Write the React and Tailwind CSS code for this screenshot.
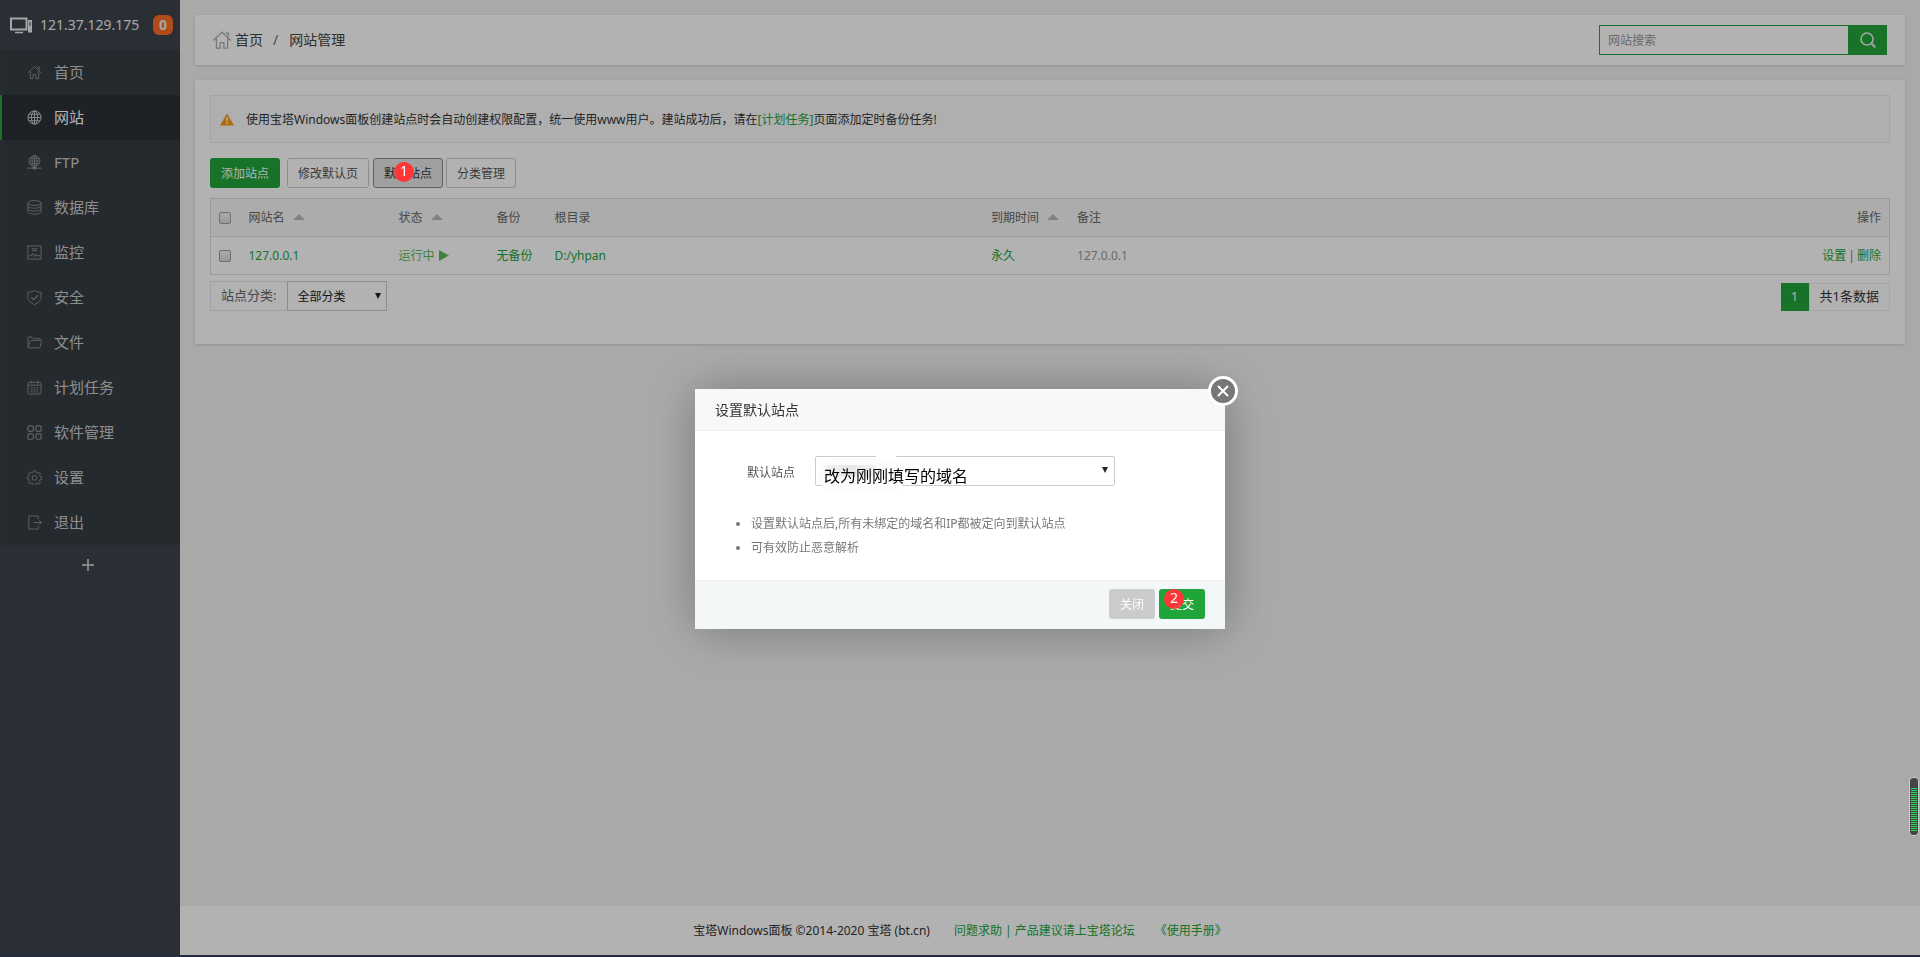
import React from "react";

const svgBase = {
  width: 15,
  height: 15,
  viewBox: "0 0 16 16",
  fill: "none",
  stroke: "currentColor",
  strokeWidth: 1,
  "aria-hidden": true,
};

function HomeIcon({ className }) {
  return (
    <svg {...svgBase} className={className}>
      <path d="M1 8.4 8 1.6l7 6.8M3.5 6.8v7.7h3V10h3v4.500h3V6.800M11 2.400h2v3" />
    </svg>
  );
}

function GlobeIcon() {
  return (
    <svg {...svgBase}>
      <circle cx="8" cy="8" r="7" />
      <ellipse cx="8" cy="8" rx="3.300" ry="7" />
      <path d="M8 1v14M1 8h14M2 4.500h12M2 11.500h12" />
    </svg>
  );
}

function FtpIcon() {
  return (
    <svg {...svgBase}>
      <circle cx="8" cy="6.500" r="5.800" />
      <ellipse cx="8" cy="6.500" rx="2.700" ry="5.800" />
      <path d="M8 .7v13M2.200 6.500h11.600M3 3.700h10M3 9.300h10" />
      <path d="M0 14h16" />
      <path d="M6 14h4" strokeWidth="2.500" />
    </svg>
  );
}

function DatabaseIcon() {
  return (
    <svg {...svgBase}>
      <ellipse cx="8" cy="3.200" rx="7" ry="2.500" />
      <path d="M1 3.200v9.400c0 1.400 3.100 2.500 7 2.500s7-1.100 7-2.500V3.200M1 6.300c0 1.400 3.100 2.500 7 2.500s7-1.100 7-2.500M1 9.400c0 1.400 3.100 2.500 7 2.500s7-1.100 7-2.500" />
    </svg>
  );
}

function MonitorIcon() {
  return (
    <svg {...svgBase}>
      <rect x="1" y="1" width="14" height="14" />
      <path d="M5 4h6M5 6h6M2 11.500h2.500L6 8.500l2 4 1.500-3 1 2H14" />
    </svg>
  );
}

function ShieldIcon() {
  return (
    <svg {...svgBase}>
      <path d="M8 .6c2.200 1.200 4.300 1.600 7 1.700v5.200c0 3.700-2.800 6.300-7 8-4.200-1.700-7-4.300-7-8V2.300C3.700 2.200 5.800 1.800 8 .6z" />
      <path d="m4.500 7.700 2.700 2.700 4.600-4.800" strokeWidth="1.300" />
    </svg>
  );
}

function FolderIcon() {
  return (
    <svg {...svgBase}>
      <path d="M1 13V3.200c0-.7.300-1 1-1h3.300l1.500 1.600h6.200c.7 0 1 .3 1 1v1M1 13c0 .4.300.700.8.700h11.200c.6 0 .9-.3 1-.8l1.500-6.200c.1-.6-.2-.9-.7-.9H4.700c-.6 0-1 .2-1.200.8z" />
    </svg>
  );
}

function CalendarIcon() {
  return (
    <svg {...svgBase}>
      <rect x="1" y="2.500" width="14" height="12.500" rx="1.500" />
      <path d="M4.500 .8v3M11.500 .8v3M1 5.500h14" />
      <path d="M4 8.300h8M4 10.500h8M4 12.700h8" strokeDasharray="2 1" />
    </svg>
  );
}

function GridIcon() {
  return (
    <svg {...svgBase} strokeWidth="1.300">
      <rect x="1" y="1" width="5.700" height="5.700" rx="1.500" />
      <rect x="9.500" y="1" width="5.700" height="5.700" rx="1.500" />
      <rect x="1" y="9.500" width="5.700" height="5.700" rx="1.500" />
      <rect x="9.500" y="9.500" width="5.700" height="5.700" rx="1.500" />
    </svg>
  );
}

function GearIcon() {
  return (
    <svg {...svgBase}>
      <path d="M6.800 .8h2.400l.5 1.900 1.300.6 1.700-1 1.700 1.700-1 1.700.6 1.300 1.700.4v2.300l-1.800.5-.6 1.300 1 1.700-1.700 1.700-1.700-1-1.200.6-.5 1.700H6.800l-.5-1.800-1.300-.5-1.700 1-1.700-1.700 1-1.700-.6-1.300-1.600-.5V7.400L2 7l.6-1.300-1-1.700 1.700-1.700 1.700 1 1.300-.6z" />
      <circle cx="8" cy="8.400" r="2.500" />
    </svg>
  );
}

function ExitIcon() {
  return (
    <svg {...svgBase}>
      <path d="M12 4.500V1H2v14h10v-3.500M7 8h8.500M12.800 5.500 15.300 8l-2.500 2.500" />
    </svg>
  );
}

const menu = [
  { label: "首页", Icon: HomeIcon },
  { label: "网站", Icon: GlobeIcon, active: true },
  { label: "FTP", Icon: FtpIcon },
  { label: "数据库", Icon: DatabaseIcon },
  { label: "监控", Icon: MonitorIcon },
  { label: "安全", Icon: ShieldIcon },
  { label: "文件", Icon: FolderIcon },
  { label: "计划任务", Icon: CalendarIcon },
  { label: "软件管理", Icon: GridIcon },
  { label: "设置", Icon: GearIcon },
  { label: "退出", Icon: ExitIcon },
];

function Sidebar() {
  return (
    <aside className="w-45 shrink-0 bg-[#3c444d]">
      <div className="flex h-[50px] items-center pl-2.5 text-sm text-[#eee]">
        <svg width="22" height="17" viewBox="0 0 22 17" fill="none" stroke="currentColor" aria-hidden="true">
          <rect x="1" y="1.500" width="15.500" height="11" strokeWidth="2" />
          <path d="M5 15.500h8" strokeWidth="1.500" />
          <rect x="18.500" y="3.500" width="3" height="11.500" fill="currentColor" />
          <path d="M19 6h2M19 8h2" stroke="#3c444d" />
        </svg>
        <span className="ml-2 flex-1">121.37.129.175</span>
        <span className="mr-[7px] flex size-5 items-center justify-center rounded-md bg-[#fc6d26] text-sm font-bold">
          0
        </span>
      </div>
      <nav className="bg-[#353d44]">
        <ul>
          {menu.map(({ label, Icon, active }) => (
            <li key={label}>
              <a
                href="#"
                className={
                  active
                    ? "flex h-[45px] items-center gap-3 border-l-2 border-[#20a53a] bg-[#2c3138] pb-px pl-[25px] text-[15px] text-white"
                    : "flex h-[45px] items-center gap-3 border-l-2 border-[#3b3f43] pb-px pl-[25px] text-[15px] text-[#ccc]"
                }
              >
                <span className={active ? "text-[#ccc]" : "text-[#8b9095]"}>
                  <Icon />
                </span>
                {label}
              </a>
            </li>
          ))}
        </ul>
      </nav>
      <button type="button" aria-label="添加" className="flex h-10 w-full items-center justify-center pr-1 text-[#bbb]">
        <svg width="14" height="14" viewBox="0 0 14 14" fill="none" stroke="currentColor" strokeWidth="2" aria-hidden="true">
          <path d="M7 1v12M1 7h12" />
        </svg>
      </button>
    </aside>
  );
}

function Badge({ children }) {
  return (
    <span className="flex size-5 items-center justify-center rounded-full bg-[#ff3737] pb-0.5 text-sm leading-4 text-white">
      {children}
    </span>
  );
}

function SortArrow() {
  return (
    <svg className="mb-0.5 ml-2 inline-block align-baseline" width="12" height="6" viewBox="0 0 12 6" aria-hidden="true">
      <path d="M0 6 6 0l6 6z" fill="#bbb" />
    </svg>
  );
}

function Checkbox({ label }) {
  return (
    <input
      type="checkbox"
      aria-label={label}
      className="block size-3 appearance-none rounded-xs border border-[#a0a0a0] bg-linear-to-b from-[#f4f4f4] to-[#dcdcdc]"
    />
  );
}

function DownArrow({ className }) {
  return (
    <svg className={className} width="6" height="6" viewBox="0 0 6 6" aria-hidden="true">
      <path d="M0 0h6L3 6z" fill="#222" />
    </svg>
  );
}

const outlineButton =
  "h-[30px] rounded-[3px] border border-[#ccc] bg-white px-2.5 pt-0.5 text-xs text-[#555]";

function SiteTable() {
  return (
    <table className="mt-2.5 w-full table-fixed border border-[#ddd] text-left text-xs text-[#666]">
      <colgroup>
        <col className="w-[30px]" />
        <col className="w-[150px]" />
        <col className="w-[98px]" />
        <col className="w-[58px]" />
        <col className="w-[26%]" />
        <col className="w-[86px]" />
        <col />
        <col className="w-[150px]" />
      </colgroup>
      <thead>
        <tr className="h-[38px] border-b border-[#ddd] bg-[#f6f6f6]">
          <th className="px-2"><Checkbox label="全选" /></th>
          <th className="px-2 font-normal">网站名<SortArrow /></th>
          <th className="px-2 font-normal">状态<SortArrow /></th>
          <th className="px-2 font-normal">备份</th>
          <th className="px-2 font-normal">根目录</th>
          <th className="px-2 font-normal whitespace-nowrap">到期时间<SortArrow /></th>
          <th className="px-2 font-normal">备注</th>
          <th className="px-2 text-right font-normal">操作</th>
        </tr>
      </thead>
      <tbody>
        <tr className="h-[38px] text-[#20a53a]">
          <td className="px-2"><Checkbox label="127.0.0.1" /></td>
          <td className="px-2"><a href="#">127.0.0.1</a></td>
          <td className="px-2">
            <a href="#" className="flex items-center gap-1 text-[#5cb85c]">
              运行中
              <svg width="10" height="11" viewBox="0 0 10 11" aria-hidden="true">
                <path d="M0 0l10 5.500L0 11z" fill="currentColor" />
              </svg>
            </a>
          </td>
          <td className="pl-2 whitespace-nowrap"><a href="#">无备份</a></td>
          <td className="px-2"><a href="#">D:/yhpan</a></td>
          <td className="px-2"><a href="#">永久</a></td>
          <td className="px-2 text-[#999]">127.0.0.1</td>
          <td className="px-2">
            <div className="flex justify-end gap-0.5">
              <a href="#">设置</a>
              <span className="text-[#777]">|</span>
              <a href="#">删除</a>
            </div>
          </td>
        </tr>
      </tbody>
    </table>
  );
}

function Content() {
  return (
    <div className="flex min-w-0 flex-1 flex-col bg-[#f3f3f3]">
      <main className="flex flex-1 flex-col gap-[15px] p-[15px]">
        <header className="flex h-[50px] items-center justify-between bg-white pr-[18px] pl-[17px] shadow-[0_1px_3px_rgba(0,0,0,0.15)]">
          <div className="flex items-center text-sm text-[#444]">
            <HomeIcon className="size-5 text-[#aaa]" />
            <a href="#" className="ml-[3px]">首页</a>
            <span className="mr-[11px] ml-2.5 text-[#666]">/</span>
            <span>网站管理</span>
          </div>
          <form className="flex h-[30px]" onSubmit={(e) => e.preventDefault()}>
            <input
              type="text"
              aria-label="网站搜索"
              placeholder="网站搜索"
              className="w-[249px] border border-r-0 border-[#20a53a] bg-white px-2 pt-0.5 text-xs placeholder:text-[#999]"
            />
            <button type="submit" aria-label="搜索" className="flex w-[39px] items-center justify-center bg-[#20a53a] text-[#eee]">
              <svg width="16" height="16" viewBox="0 0 16 16" fill="none" stroke="currentColor" aria-hidden="true">
                <circle cx="7" cy="7" r="6" strokeWidth="1.600" />
                <path d="m11.300 11.300 4 4" strokeWidth="2" />
              </svg>
            </button>
          </form>
        </header>

        <section className="bg-white px-[15px] pt-[15px] pb-[33px] shadow-[0_1px_3px_rgba(0,0,0,0.15)]">
          <div className="flex h-12 items-center gap-3 border border-[#eaeaea] bg-[#fbfbfb] px-[9px] text-xs text-[#333]">
            <svg width="14" height="13" viewBox="0 0 15 13" aria-hidden="true">
              <path d="M7.500 0 15 13H0z" fill="#f59a0c" />
              <path d="M7.500 4v4.500M7.500 9.800v1.500" stroke="#fff" strokeWidth="1.700" />
            </svg>
            <p className="pt-0.5">
              使用宝塔Windows面板创建站点时会自动创建权限配置，统一使用www用户。建站成功后，请在
              <a href="#" className="text-[#20a53a]">[计划任务]</a>页面添加定时备份任务!
            </p>
          </div>

          <div className="mt-[15px] flex">
            <button type="button" className="mr-[7px] h-[30px] rounded-[3px] bg-[#20a53a] px-[11px] pt-0.5 text-xs text-white">
              添加站点
            </button>
            <button type="button" className={outlineButton}>修改默认页</button>
            <button
              type="button"
              className="mr-[3px] ml-1 h-[30px] rounded-[3px] border border-[#8c8c8c] bg-[#e6e6e6] px-2.5 pt-0.5 text-xs text-[#333]"
            >
              默认站点
            </button>
            <button type="button" className={outlineButton}>分类管理</button>
          </div>

          <SiteTable />

          <div className="mt-1.5 flex items-start justify-between">
            <div className="flex h-[30px] text-[#666]">
              <label htmlFor="category" className="flex items-center border border-r-0 border-[#e6e6e6] pr-[11px] pl-2.5 text-[13px]">
                站点分类:
              </label>
              <div className="relative">
                <select
                  id="category"
                  className="h-full w-[100px] appearance-none border border-[#ccc] bg-white pt-0.5 pl-[9px] text-xs text-[#222]"
                >
                  <option>全部分类</option>
                </select>
                <DownArrow className="pointer-events-none absolute top-3 right-1.5" />
              </div>
            </div>
            <div className="mt-0.5 flex h-7 text-[13px]">
              <span className="flex w-7 items-center justify-center bg-[#20a53a] text-white">1</span>
              <span className="flex items-center border border-[#ececec] px-2.5 text-[#333]">共1条数据</span>
            </div>
          </div>
        </section>
      </main>

      <footer className="flex h-[50px] items-center justify-center border-t border-[#f0f0f0] bg-white pr-[180px] text-xs text-[#333]">
        <span>宝塔Windows面板 ©2014-2020 宝塔 (bt.cn)</span>
        <a href="#" className="ml-6 text-[#20a53a]">问题求助 | 产品建议请上宝塔论坛</a>
        <a href="#" className="ml-5 text-[#20a53a]">《使用手册》</a>
      </footer>
    </div>
  );
}

function Dialog() {
  return (
    <div
      role="dialog"
      aria-labelledby="dialog-title"
      className="relative w-[530px] rounded-t-xs bg-white shadow-[1px_1px_50px_rgba(0,0,0,0.3)]"
    >
      <h2 id="dialog-title" className="h-[42px] border-b border-[#eee] bg-[#f8f8f8] pl-5 text-sm leading-[42px] text-[#333]">
        设置默认站点
      </h2>
      <button
        type="button"
        aria-label="关闭"
        className="absolute -top-[13px] -right-[13px] flex size-[30px] items-center justify-center rounded-full border-3 border-white bg-[#777] text-white"
      >
        <svg width="12" height="12" viewBox="0 0 12 12" fill="none" stroke="currentColor" strokeWidth="2" aria-hidden="true">
          <path d="m1 1 10 10M11 1 1 11" />
        </svg>
      </button>

      <div className="px-10 pt-[25px] pb-5">
        <div className="flex items-center">
          <label htmlFor="default-site" className="w-[60px] pt-1 text-right text-xs text-[#555]">
            默认站点
          </label>
          <div className="relative ml-5 h-[30px] w-[300px] rounded-xs border border-[#ccc]">
            <span className="absolute -top-px left-[60px] h-px w-5 bg-white" />
            <span className="absolute top-0.5 left-0.5 h-8 w-[88px] rounded-2xl bg-[#fcfcfc]" />
            <span className="absolute top-2 left-2 h-3 w-[52px] bg-linear-to-r from-[#f4f4f4] via-[#e6e6e6] to-[#f0f0f0]" />
            <select
              id="default-site"
              className="relative h-[30px] w-full appearance-none bg-transparent pt-2 pl-2 text-base leading-5 text-black"
            >
              <option>改为刚刚填写的域名</option>
            </select>
            <DownArrow className="pointer-events-none absolute top-2.5 right-1.5" />
          </div>
        </div>
        <ul className="mt-[26px] list-disc pl-4 text-xs leading-6 text-[#777]">
          <li>设置默认站点后,所有未绑定的域名和IP都被定向到默认站点</li>
          <li>可有效防止恶意解析</li>
        </ul>
      </div>

      <div className="flex h-[49px] items-start justify-end gap-1 border-t border-[#edf1f2] bg-[#f4f7f7] pt-2 pr-5 text-xs text-white">
        <button type="button" className="h-[30px] rounded-[3px] bg-[#cbcbcb] px-[11px] pt-0.5">关闭</button>
        <div className="relative">
          <button type="button" className="h-[30px] rounded-[3px] bg-[#20a53a] px-[11px] pt-0.5">提交</button>
          <div className="pointer-events-none absolute top-0 left-[5px]">
            <Badge>2</Badge>
          </div>
        </div>
      </div>
    </div>
  );
}

export default function App() {
  return (
    <div className="flex min-h-screen flex-col font-['Noto_Sans','Noto_Sans_CJK_SC',sans-serif]">
      <div className="flex flex-1">
        <Sidebar />
        <Content />
      </div>
      <div className="h-0.5 bg-[#35405b]" />

      <div className="fixed inset-0 flex items-center justify-center bg-black/30 pt-[61px]">
        <Dialog />
      </div>

      <div className="pointer-events-none absolute top-[162px] left-[394px]">
        <Badge>1</Badge>
      </div>

      <div className="fixed right-px bottom-[121px] flex h-[59px] w-2.5 flex-col justify-end rounded-sm border border-[#ccc] bg-[#444] px-px pb-1">
        <div className="h-[43px] bg-[repeating-linear-gradient(to_bottom,#1fd65f_0px,#1fd65f_1px,#444_1px,#444_2px)]" />
      </div>
    </div>
  );
}
